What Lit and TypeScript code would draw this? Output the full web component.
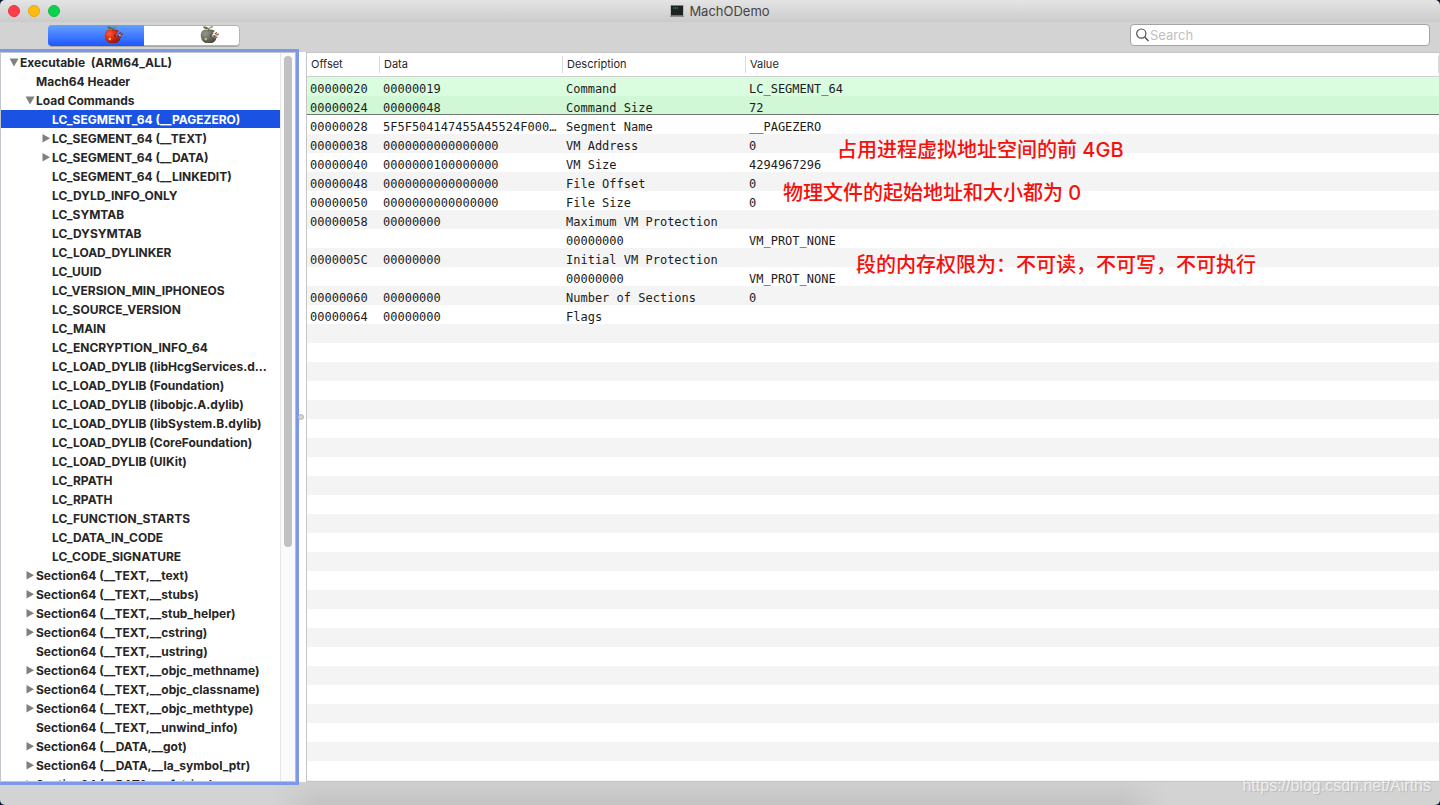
import { LitElement, html, css, svg, nothing } from "lit";
import { customElement, state, property } from "lit/decorators.js";
import { classMap } from "lit/directives/class-map.js";

type Fold = "open" | "closed" | "none";
interface TreeNode {
  label: string;
  level: 0 | 1 | 2;
  fold: Fold;
}

const node = (level: 0 | 1 | 2, label: string, fold: Fold = "none"): TreeNode => ({ label, level, fold });

const NODES: TreeNode[] = [
  node(0, "Executable  (ARM64_ALL)", "open"),
  node(1, "Mach64 Header"),
  node(1, "Load Commands", "open"),
  node(2, "LC_SEGMENT_64 (__PAGEZERO)"),
  node(2, "LC_SEGMENT_64 (__TEXT)", "closed"),
  node(2, "LC_SEGMENT_64 (__DATA)", "closed"),
  node(2, "LC_SEGMENT_64 (__LINKEDIT)"),
  node(2, "LC_DYLD_INFO_ONLY"),
  node(2, "LC_SYMTAB"),
  node(2, "LC_DYSYMTAB"),
  node(2, "LC_LOAD_DYLINKER"),
  node(2, "LC_UUID"),
  node(2, "LC_VERSION_MIN_IPHONEOS"),
  node(2, "LC_SOURCE_VERSION"),
  node(2, "LC_MAIN"),
  node(2, "LC_ENCRYPTION_INFO_64"),
  node(2, "LC_LOAD_DYLIB (libHcgServices.dylib)"),
  node(2, "LC_LOAD_DYLIB (Foundation)"),
  node(2, "LC_LOAD_DYLIB (libobjc.A.dylib)"),
  node(2, "LC_LOAD_DYLIB (libSystem.B.dylib)"),
  node(2, "LC_LOAD_DYLIB (CoreFoundation)"),
  node(2, "LC_LOAD_DYLIB (UIKit)"),
  node(2, "LC_RPATH"),
  node(2, "LC_RPATH"),
  node(2, "LC_FUNCTION_STARTS"),
  node(2, "LC_DATA_IN_CODE"),
  node(2, "LC_CODE_SIGNATURE"),
  node(1, "Section64 (__TEXT,__text)", "closed"),
  node(1, "Section64 (__TEXT,__stubs)", "closed"),
  node(1, "Section64 (__TEXT,__stub_helper)", "closed"),
  node(1, "Section64 (__TEXT,__cstring)", "closed"),
  node(1, "Section64 (__TEXT,__ustring)"),
  node(1, "Section64 (__TEXT,__objc_methname)", "closed"),
  node(1, "Section64 (__TEXT,__objc_classname)", "closed"),
  node(1, "Section64 (__TEXT,__objc_methtype)", "closed"),
  node(1, "Section64 (__TEXT,__unwind_info)"),
  node(1, "Section64 (__DATA,__got)", "closed"),
  node(1, "Section64 (__DATA,__la_symbol_ptr)", "closed"),
  node(1, "Section64 (__DATA,__cfstring)", "closed"),
];

const ROWS: [string, string, string, string][] = [
  ["00000020", "00000019", "Command", "LC_SEGMENT_64"],
  ["00000024", "00000048", "Command Size", "72"],
  ["00000028", "5F5F504147455A45524F000000000000", "Segment Name", "__PAGEZERO"],
  ["00000038", "0000000000000000", "VM Address", "0"],
  ["00000040", "0000000100000000", "VM Size", "4294967296"],
  ["00000048", "0000000000000000", "File Offset", "0"],
  ["00000050", "0000000000000000", "File Size", "0"],
  ["00000058", "00000000", "Maximum VM Protection", ""],
  ["", "", "00000000", "VM_PROT_NONE"],
  ["0000005C", "00000000", "Initial VM Protection", ""],
  ["", "", "00000000", "VM_PROT_NONE"],
  ["00000060", "00000000", "Number of Sections", "0"],
  ["00000064", "00000000", "Flags", ""],
];

@customElement("title-bar")
class TitleBar extends LitElement {
  static styles = css`
    :host {
      display: grid;
      grid-template-columns: 1fr auto 1fr;
      align-items: center;
      height: 22px;
      background: linear-gradient(#e4e4e4, #cbcbcb);
      border-radius: 5px 5px 0 0;
    }
    .lights {
      display: flex;
      gap: 8px;
      padding-left: 8px;
    }
    .light {
      width: 12px;
      height: 12px;
      padding: 0;
      border: 1px solid;
      border-radius: 50%;
    }
    .close { background: #fd3e4c; border-color: #e8323f; }
    .minimize { background: #fdbc0a; border-color: #e6a812; }
    .zoom { background: #0ad24c; border-color: #12bb3e; }
    .title {
      display: flex;
      align-items: center;
      gap: 5px;
      margin: 0;
      font: 400 13px/22px Inter, sans-serif;
      color: #444;
    }
    .icon { display: block; }
  `;
  render() {
    return html`
      <div class="lights">
        <button class="light close" aria-label="Close"></button>
        <button class="light minimize" aria-label="Minimize"></button>
        <button class="light zoom" aria-label="Zoom"></button>
      </div>
      <h1 class="title">
        <svg class="icon" width="14" height="14" viewBox="0 0 14 14" aria-hidden="true">
          <rect x="0" y="1" width="14" height="12" fill="#b9bcbb" />
          <rect x="0" y="11.5" width="14" height="1.5" fill="#8c8f8e" />
          <rect x="1" y="1.6" width="12" height="9.8" fill="#1d2223" />
          <path d="M3 4h5" stroke="#1fb560" stroke-width="1" stroke-dasharray="1.4 .4" />
        </svg>
        MachODemo
      </h1>
      <span></span>
    `;
  }
}

@customElement("worm-apple")
class WormApple extends LitElement {
  @property({ type: Boolean }) gray = false;
  static styles = css`
    :host { display: block; }
    svg { display: block; }
  `;
  render() {
    const g = this.gray;
    return html`
      <svg width="20" height="20" viewBox="0 0 20 20" aria-hidden="true">
        <defs>
          <radialGradient id="skin" cx=".3" cy=".3" r=".8">
            <stop offset="0" stop-color=${g ? "#95978a" : "#ff5a38"} />
            <stop offset=".5" stop-color=${g ? "#6d6f60" : "#d9290f"} />
            <stop offset="1" stop-color=${g ? "#47493e" : "#8e1607"} />
          </radialGradient>
        </defs>
        <path
          d="M8.500 5C5 3.600 1.200 5 .8 9.500c-.2 3.800 1.500 7.300 4.200 8.300 1.300.5 2.300.1 3.800.1 1.600.1 3 .5 4.300-.3 1.700-1 2.900-2.700 3.300-4.600-1.300.4-2.300 0-2.700-1-1.100 0-1.900-.9-1.500-1.900.2-.7.6-1 1.100-1.200-.3-1.300.4-2.300 1.700-2.600C13.500 4.600 11 4.200 8.500 5Z"
          fill="url(#skin)"
        />
        <path d="M8.500 5.600 9.300 2.500" stroke="#5a4420" stroke-width="1" />
        <path d="M8.800 3.900C6.200 4.600 3.600 3.800 2.800 1.800 5.600.8 8 1.800 8.800 3.900Z" fill=${g ? "#64703f" : "#647018"} />
        <path d="M9.400 2.800C10.400 1.200 12 .9 13.400 1.600 12.500 3 11 3.500 9.400 2.800Z" fill=${g ? "#8c9468" : "#8a9630"} />
        <path d="M12.800 10.800h2.400l3.600-2M14 12.200h3.400M14.800 8.900l2.200-1.300" stroke=${g ? "#8a4a3a" : "#7d2414"} stroke-width="1.200" fill="none" />
        <circle cx="15.800" cy="10.200" r="1" fill="#dcb894" />
        <circle cx="5.800" cy="14" r="1.300" fill=${g ? "#c9bc90" : "#f6c05a"} />
        <path d="M11 9.500c-.5.900-.5 1.700 0 2.500" stroke=${g ? "#3f4137" : "#6e1005"} fill="none" />
      </svg>
    `;
  }
}

@customElement("tool-bar")
class ToolBar extends LitElement {
  @state() mode = 0;
  static styles = css`
    :host {
      display: flex;
      justify-content: space-between;
      align-items: center;
      box-sizing: border-box;
      height: 30px;
      padding: 0 10px 4px 48px;
      background: #d3d3d3;
    }
    .segments {
      display: flex;
      width: 192px;
      height: 21px;
      box-sizing: border-box;
      border-radius: 4px;
      background: #fff;
      box-shadow: 0 0 0 1px #b4b4b4 inset, 0 1px 0 #a9a9a9;
      overflow: hidden;
    }
    .segment {
      flex: 1;
      display: flex;
      align-items: center;
      justify-content: flex-end;
      padding: 0 20px 0 0;
      border: 0;
      background: none;
    }
    .active { background: linear-gradient(#64a1ff, #1f57ff); }
    .search {
      display: flex;
      align-items: center;
      gap: 1px;
      box-sizing: border-box;
      width: 300px;
      height: 22px;
      padding: 0 5px;
      border: 1px solid #a3a3a3;
      border-radius: 4px;
      background: #fff;
    }
    .input {
      flex: 1;
      min-width: 0;
      padding: 0;
      border: 0;
      outline: 0;
      background: none;
      font: 400 13px/20px Inter, sans-serif;
      color: #222;
    }
    .input::placeholder { color: #bfbfbf; }
  `;
  render() {
    return html`
      <div class="segments">
        ${[0, 1].map(
          (i) => html`<button
            class=${classMap({ segment: true, active: this.mode === i })}
            aria-label=${i ? "Gray" : "Red"}
            aria-pressed=${this.mode === i}
            @click=${() => (this.mode = i)}
          ><worm-apple ?gray=${i === 1}></worm-apple></button>`
        )}
      </div>
      <label class="search">
        <svg width="13" height="14" viewBox="0 0 13 14" fill="none" stroke="#4c4c4c" stroke-width="1.200" aria-hidden="true">
          <circle cx="5.300" cy="5.600" r="4.600" />
          <path d="m8.700 9 3.800 3.900" stroke-width="1.400" />
        </svg>
        <input class="input" type="text" placeholder="Search" aria-label="Search" />
      </label>
    `;
  }
}

@customElement("outline-tree")
class OutlineTree extends LitElement {
  @state() selected = 3;
  static styles = css`
    :host {
      position: relative;
      z-index: 1;
      display: flex;
      box-sizing: border-box;
      width: 296px;
      min-height: 0;
      border: 1px solid #c3c5cd;
      border-right-color: #b9bccb;
      background: #fff;
      box-shadow: 0 0 0 3px #7d98ea;
    }
    .rows {
      flex: 1;
      min-width: 0;
      margin: 0;
      padding: 0;
      list-style: none;
      overflow: hidden;
      font: 700 12px/17px Inter, sans-serif;
      color: #262626;
    }
    .row {
      display: flex;
      height: 18px;
      margin-bottom: 1px;
      padding-right: 8px;
    }
    .level0 { padding-left: 7px; }
    .level1 { padding-left: 23px; }
    .level2 { padding-left: 39px; }
    .selected { background: #1a53e4; color: #fff; }
    .toggle {
      flex: none;
      display: flex;
      align-items: center;
      justify-content: center;
      width: 12px;
      padding: 0;
      border: 0;
      background: none;
    }
    .label {
      min-width: 0;
      padding: 1px 0 0;
      border: 0;
      background: none;
      font: inherit;
      color: inherit;
      text-align: left;
      white-space: pre;
      overflow: hidden;
      text-overflow: ellipsis;
    }
    .track {
      flex: none;
      box-sizing: border-box;
      width: 15px;
      padding: 3px;
      border-left: 1px solid #e6e6e6;
      background: #fafafa;
    }
    .thumb {
      width: 8px;
      height: 68%;
      border-radius: 4px;
      background: #c1c1c1;
    }
  `;
  render() {
    return html`
      <ul class="rows">
        ${NODES.map(
          (n, i) => html`<li class=${classMap({ row: true, ["level" + n.level]: true, selected: i === this.selected })}>
            ${n.fold === "none"
              ? html`<span class="toggle"></span>`
              : html`<button class="toggle" aria-label="Toggle ${n.label}" aria-expanded=${n.fold === "open"}>
                  <svg width="10" height="10" viewBox="0 0 10 10" fill="#808080" aria-hidden="true">
                    ${n.fold === "open" ? svg`<path d="M.5 1.500h9L5 9.500Z" />` : svg`<path d="M1.500 1v8.500L9 5.200Z" />`}
                  </svg>
                </button>`}
            <button class="label" @click=${() => (this.selected = i)}>${n.label}</button>
          </li>`
        )}
      </ul>
      <div class="track"><div class="thumb"></div></div>
    `;
  }
}

@customElement("detail-table")
class DetailTable extends LitElement {
  static styles = css`
    :host {
      position: relative;
      display: block;
      flex: 1;
      min-width: 0;
      box-sizing: border-box;
      border: 1px solid #c6c6c6;
      border-right-color: #d6d6d6;
      overflow: hidden;
      background: repeating-linear-gradient(#fff 0 19px, #f4f4f4 19px 38px) 0 24px;
    }
    .table {
      width: 100%;
      table-layout: fixed;
      border-collapse: separate;
      border-spacing: 0;
    }
    .offset { width: 73px; }
    .wide { width: 183px; }
    .head {
      height: 23px;
      padding: 0;
      border-bottom: 1px solid #cfcfcf;
      background: #fff;
      font: 400 11px/17px Inter, sans-serif;
      color: #262626;
      text-align: left;
    }
    .caption {
      display: block;
      padding-left: 4px;
      border-right: 1px solid #d9d9d9;
    }
    .cell {
      box-sizing: border-box;
      height: 19px;
      padding: 6px 5px 0 3px;
      font: 400 12px/13px "DejaVu Sans Mono", monospace;
      color: #1c1c1c;
      white-space: nowrap;
      overflow: hidden;
      text-overflow: ellipsis;
    }
    .light { background: #dafde0; }
    .dark { background: #d0f8d6; }
    .dark .cell { border-bottom: 1px solid #767676; line-height: 12px; }
    .note {
      position: absolute;
      margin: 0;
      font: 500 20px/28px Inter, "Noto Sans CJK SC", sans-serif;
      color: #f5100c;
      white-space: nowrap;
    }
    .vm { left: 530px; top: 83px; }
    .file { left: 476px; top: 126px; }
    .protection { left: 549px; top: 198px; }
  `;
  render() {
    return html`
      <table class="table">
        <colgroup>
          <col class="offset" />
          <col class="wide" />
          <col class="wide" />
          <col />
        </colgroup>
        <thead>
          <tr>
            ${["Offset", "Data", "Description", "Value"].map(
              (t) => html`<th class="head" scope="col"><span class="caption">${t}</span></th>`
            )}
          </tr>
        </thead>
        <tbody>
          ${ROWS.map(
            (r, i) => html`<tr class=${i === 0 ? "light" : i === 1 ? "dark" : nothing}>
              ${r.map((c) => html`<td class="cell">${c}</td>`)}
            </tr>`
          )}
        </tbody>
      </table>
      <p class="note vm">占用进程虚拟地址空间的前 4GB</p>
      <p class="note file">物理文件的起始地址和大小都为 0</p>
      <p class="note protection">段的内存权限为：不可读，不可写，不可执行</p>
    `;
  }
}

@customElement("app-root")
class AppRoot extends LitElement {
  static styles = css`
    :host {
      position: relative;
      display: flex;
      flex-direction: column;
      height: 100vh;
      background: #0b1436;
      overflow: hidden;
    }
    .body {
      flex: 1;
      display: flex;
      min-height: 0;
      background: #fff;
    }
    .splitter {
      flex: none;
      display: flex;
      align-items: center;
      justify-content: center;
      width: 10px;
      background: #fff;
    }
    .knob {
      position: relative;
      z-index: 2;
      box-sizing: border-box;
      width: 6px;
      height: 6px;
      border: 1px solid #b5b5b5;
      border-radius: 50%;
      background: #d8d8d8;
    }
    .footer {
      height: 23px;
      border-radius: 0 0 5px 5px;
      background:
        linear-gradient(90deg, #d3d3d3 19%, transparent 22%, transparent 78%, #d3d3d3 81%),
        linear-gradient(#cfcfcf, #c3c3c3);
    }
    .watermark {
      position: absolute;
      right: 9px;
      bottom: 8px;
      font: 400 16px/22px "Liberation Sans", sans-serif;
      color: rgba(255, 255, 255, 0.7);
      text-shadow: 1px 1px 1px rgba(120, 120, 120, 0.3);
      text-decoration: none;
    }
  `;
  render() {
    return html`
      <title-bar></title-bar>
      <tool-bar></tool-bar>
      <div class="body">
        <outline-tree></outline-tree>
        <div class="splitter"><span class="knob"></span></div>
        <detail-table></detail-table>
      </div>
      <div class="footer"></div>
      <a class="watermark" href="https://blog.csdn.net/Airths">https://blog.csdn.net/Airths</a>
    `;
  }
}
